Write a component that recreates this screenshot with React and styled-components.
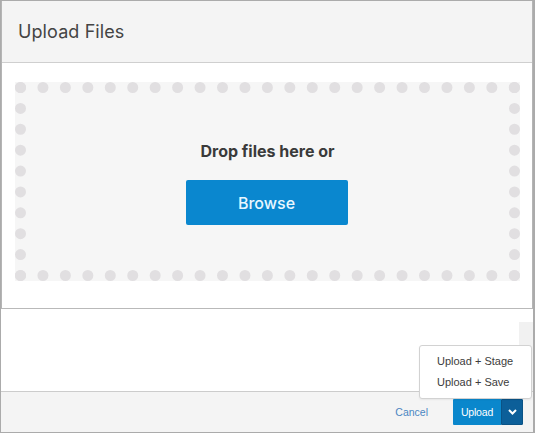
import React from 'react';
import styled, { createGlobalStyle } from 'styled-components';

const GlobalStyle = createGlobalStyle`
    html, body {
        margin: 0;
        padding: 0;
        background: #ffffff;
    }
    body {
        font-family: Inter, "Noto Sans", sans-serif;
    }
`;

const Frame = styled.div`
    width: 535px;
    height: 433px;
    box-sizing: border-box;
    border: 1px solid #ababab;
    border-right-width: 2px;
    display: flex;
    flex-direction: column;
    position: relative;
    background: #ffffff;
`;

const UploadPanel = styled.div`
    border-left: 1px solid #b5b5b5;
    border-right: 1px solid #b5b5b5;
    border-bottom: 1px solid #b9b9b9;
    display: flex;
    flex-direction: column;
`;

const Header = styled.div`
    height: 61px;
    background: #f4f4f4;
    border-bottom: 1px solid #cfcfcf;
    display: flex;
    align-items: center;
    padding: 0 0 0 16px;
`;

const Title = styled.h1`
    margin: 0;
    font-size: 18px;
    font-weight: 400;
    color: #444444;
    letter-spacing: 0.1px;
`;

const DropArea = styled.div`
    margin: 19px 12px 27px 13px;
    height: 199px;
    box-sizing: border-box;
    border: 11px dotted #e1dfe1;
    background: #f6f6f6;
    display: flex;
    flex-direction: column;
    align-items: center;
    justify-content: center;
    gap: 19px;
    padding-top: 3px;
`;

const DropText = styled.div`
    font-size: 16px;
    font-weight: 700;
    color: #3a3a3a;
`;

const BrowseButton = styled.button`
    width: 162px;
    height: 45px;
    margin-left: -2px;
    border: none;
    border-radius: 2px;
    background: #0a87cf;
    color: #e8f7ff;
    font-family: Inter, "Noto Sans", sans-serif;
    font-size: 16px;
    font-weight: 500;
    cursor: pointer;
`;

const Blank = styled.div`
    flex: 1;
    display: flex;
    justify-content: flex-end;
`;

const ScrollThumb = styled.div`
    width: 14px;
    margin-top: 13px;
    background: #f1f1f1;
`;

const Footer = styled.div`
    height: 40px;
    background: #f4f4f4;
    border-top: 1px solid #cccccc;
    display: flex;
    align-items: center;
    justify-content: flex-end;
    padding-right: 10px;
    font-family: "Liberation Sans", Arial, sans-serif;
`;

const CancelLink = styled.a`
    font-size: 10.5px;
    color: #4a86c2;
    text-decoration: none;
    margin-right: 25px;
    cursor: pointer;
`;

const SplitButton = styled.div`
    display: flex;
    height: 26px;
`;

const MainButton = styled.button`
    width: 48px;
    border: none;
    background: #0a87cc;
    color: #ffffff;
    font-family: "Liberation Sans", Arial, sans-serif;
    font-size: 10.5px;
    letter-spacing: -0.2px;
    padding: 0;
    border-radius: 1px 0 0 1px;
`;

const ToggleButton = styled.button`
    width: 22px;
    border: 1px solid #0a5386;
    background: #0c5f99;
    display: flex;
    align-items: center;
    justify-content: center;
    padding: 0;
    border-radius: 0 1px 1px 0;
`;

const Menu = styled.ul`
    position: absolute;
    left: 418px;
    top: 344px;
    width: 111px;
    margin: 0;
    padding: 5px 0;
    list-style: none;
    background: #ffffff;
    border: 1px solid #d2d2d2;
    border-radius: 3px;
    box-shadow: 0 1px 2px rgba(0, 0, 0, 0.06);
`;

const MenuItem = styled.li`
    height: 21px;
    line-height: 21px;
    padding-left: 17px;
    font-family: "Liberation Sans", Arial, sans-serif;
    font-size: 11px;
    color: #3c3c3c;
`;

export default function App() {
    return (
        <>
            <GlobalStyle />
            <Frame>
                <UploadPanel>
                    <Header>
                        <Title>Upload Files</Title>
                    </Header>
                    <DropArea>
                        <DropText>Drop files here or</DropText>
                        <BrowseButton>Browse</BrowseButton>
                    </DropArea>
                </UploadPanel>
                <Blank>
                    <ScrollThumb />
                </Blank>
                <Footer>
                    <CancelLink>Cancel</CancelLink>
                    <SplitButton>
                        <MainButton>Upload</MainButton>
                        <ToggleButton>
                            <svg width="9" height="6" viewBox="0 0 9 6">
                                <path d="M1 1l3.5 3.5L8 1" fill="none" stroke="#ffffff" strokeWidth="2" />
                            </svg>
                        </ToggleButton>
                    </SplitButton>
                </Footer>
                <Menu>
                    <MenuItem>Upload + Stage</MenuItem>
                    <MenuItem>Upload + Save</MenuItem>
                </Menu>
            </Frame>
        </>
    );
}
